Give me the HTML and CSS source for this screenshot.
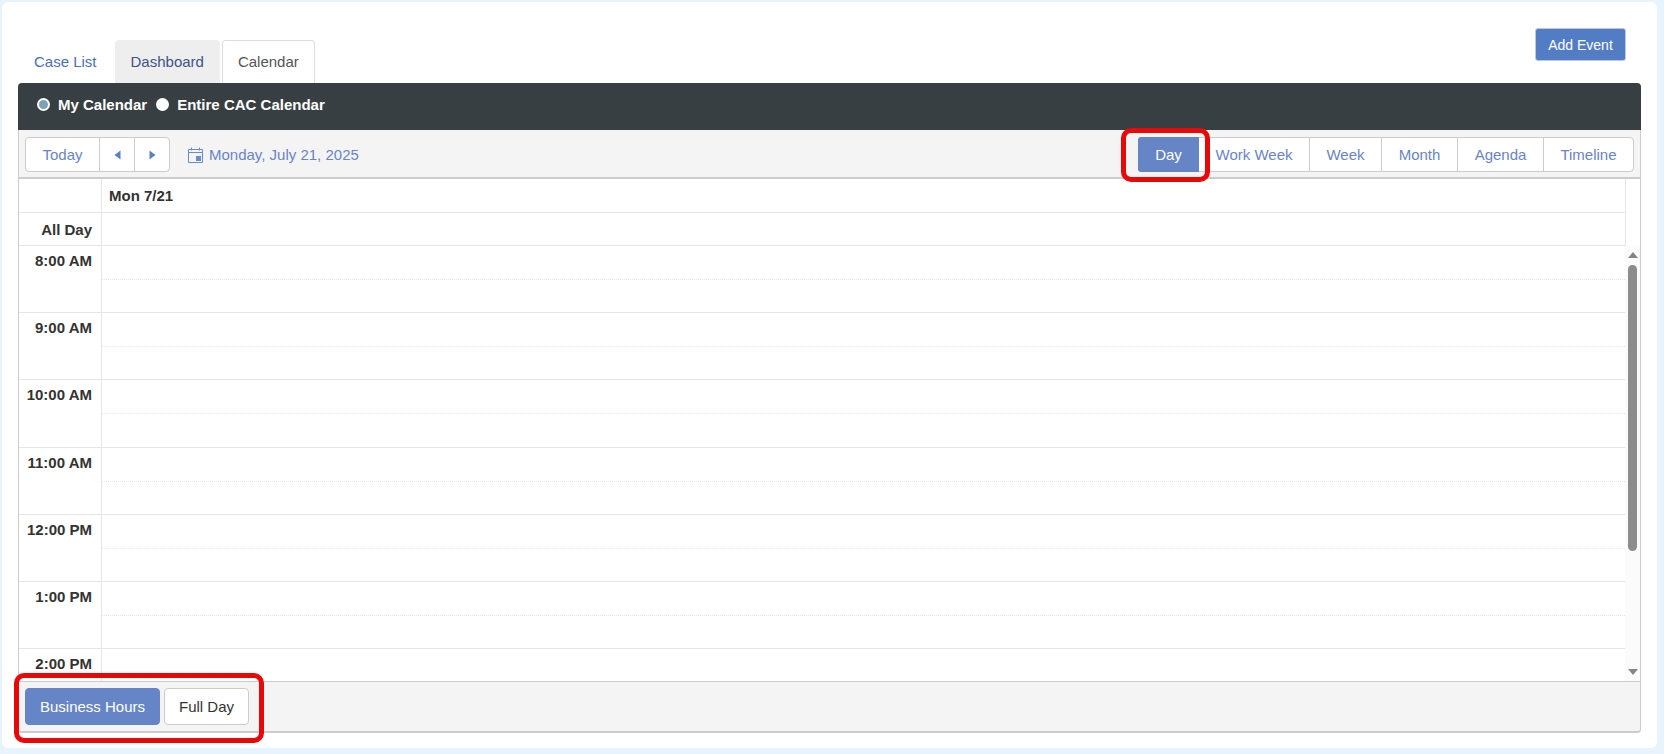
FILE: index.html
```html
<!DOCTYPE html>
<html lang="en">

<head>
    <meta charset="UTF-8">
    <meta name="viewport" content="width=device-width, initial-scale=1.0">
    <title>Calendar</title>
    <link rel="stylesheet" href="styles.css">
</head>

<body>

    <div class="card">

        <div class="top-row">
            <div class="tabs">
                <a class="tab">Case List</a>
                <a class="tab tab-grey">Dashboard</a>
                <a class="tab tab-active">Calendar</a>
            </div>
            <button class="add-btn">Add Event</button>
        </div>

        <div class="panel">

            <div class="dark-bar">
                <label class="radio-label"><span class="radio radio-on"></span>My Calendar</label>
                <label class="radio-label"><span class="radio"></span>Entire CAC Calendar</label>
            </div>

            <div class="toolbar">
                <div class="nav-group">
                    <span class="seg seg-today">Today</span>
                    <span class="seg seg-arrow">
                        <svg width="7" height="10" viewBox="0 0 7 10"><path d="M6.5 0.5V9.5L0.5 5Z" fill="#5b7fc4" /></svg>
                    </span>
                    <span class="seg seg-arrow">
                        <svg width="7" height="10" viewBox="0 0 7 10"><path d="M0.5 0.5V9.5L6.5 5Z" fill="#5b7fc4" /></svg>
                    </span>
                </div>

                <div class="date-label">
                    <svg class="date-icon" width="15" height="16" viewBox="0 0 15 16">
                        <path d="M0.5 2.5H14.5V15.5H0.5ZM0.5 5.5H14.5M3.5 0.5V3.5M11.5 0.5V3.5" fill="none" stroke="#6a8acb" />
                        <rect x="8" y="9" width="5" height="5" fill="#6a8acb" />
                    </svg>
                    Monday, July 21, 2025
                </div>

                <div class="view-group">
                    <span class="view view-day">Day</span>
                    <span class="view view-workweek">Work Week</span>
                    <span class="view view-week">Week</span>
                    <span class="view view-month">Month</span>
                    <span class="view view-agenda">Agenda</span>
                    <span class="view view-timeline">Timeline</span>
                </div>
            </div>

            <div class="head-rows">
                <div class="head-row head-row-day">
                    <div class="time-cell"></div>
                    <div class="day-cell">Mon 7/21</div>
                </div>
                <div class="head-row head-row-allday">
                    <div class="time-cell">All Day</div>
                    <div class="day-cell"></div>
                </div>
            </div>

            <div class="grid-wrap">
                <div class="slots">
                    <div class="hour"><div class="time-cell">8:00 AM</div><div class="hour-body"><div class="half"></div><div class="half"></div></div></div>
                    <div class="hour"><div class="time-cell">9:00 AM</div><div class="hour-body"><div class="half"></div><div class="half"></div></div></div>
                    <div class="hour"><div class="time-cell">10:00 AM</div><div class="hour-body"><div class="half"></div><div class="half"></div></div></div>
                    <div class="hour"><div class="time-cell">11:00 AM</div><div class="hour-body"><div class="half"></div><div class="half"></div></div></div>
                    <div class="hour"><div class="time-cell">12:00 PM</div><div class="hour-body"><div class="half"></div><div class="half"></div></div></div>
                    <div class="hour"><div class="time-cell">1:00 PM</div><div class="hour-body"><div class="half"></div><div class="half"></div></div></div>
                    <div class="hour"><div class="time-cell">2:00 PM</div><div class="hour-body"><div class="half"></div><div class="half"></div></div></div>
                </div>
                <div class="scrollbar">
                    <svg class="scroll-arrow" width="10" height="6" viewBox="0 0 10 6"><path d="M5 0L10 6H0Z" fill="#858585" /></svg>
                    <div class="scroll-track"><div class="scroll-thumb"></div></div>
                    <svg class="scroll-arrow" width="10" height="6" viewBox="0 0 10 6"><path d="M0 0H10L5 6Z" fill="#858585" /></svg>
                </div>
            </div>

            <div class="footer">
                <button class="foot-btn foot-btn-on">Business Hours</button>
                <button class="foot-btn">Full Day</button>
            </div>

            <div class="mark mark-day"></div>
            <div class="mark mark-hours"></div>

        </div>
    </div>

</body>

</html>
```

FILE: styles.css
```css
* {
    box-sizing: border-box;
}

html,
body {
    height: 100%;
}

body {
    margin: 0;
    padding: 2px 7px 6px 2px;
    background-color: #e8f4fd;
    font-family: "Liberation Sans", Arial, sans-serif;
    font-size: 15px;
    color: #333;
    overflow: hidden;
}

.card {
    height: 100%;
    padding: 26px 16px 0 16px;
    background: white;
    border-radius: 6px;
}

.top-row {
    display: flex;
    justify-content: space-between;
    height: 55px;
}

.tabs {
    display: flex;
    gap: 2px;
    margin-top: 12px;
}

.tab {
    display: block;
    height: 43px;
    padding: 12px 15px 0 15px;
    border: 1px solid transparent;
    border-bottom: none;
    border-radius: 4px 4px 0 0;
    color: #4a6fb5;
}

.tab-grey {
    background: #eeeeee;
    color: #3f5488;
}

.tab-active {
    background: white;
    border-color: #dddddd;
    color: #555;
}

.add-btn {
    width: 91px;
    height: 33px;
    margin-right: 15px;
    background: #527dc5;
    border: 1px solid #bcc8dd;
    border-radius: 3px;
    color: white;
    font: 14px "Liberation Sans", Arial, sans-serif;
}

.panel {
    position: relative;
    width: 1623px;
}

.dark-bar {
    display: flex;
    align-items: center;
    gap: 9px;
    height: 47px;
    padding: 0 0 4px 19px;
    background: #383f42;
    border-radius: 4px 4px 0 0;
}

.radio-label {
    display: flex;
    align-items: center;
    gap: 8px;
    color: white;
    font-weight: bold;
}

.radio {
    width: 13px;
    height: 13px;
    background: white;
    border-radius: 50%;
}

.radio-on {
    background: #7ba3b5;
    border: 2px solid white;
}

.toolbar {
    display: flex;
    align-items: center;
    height: 49px;
    padding: 2px 6px 0 6px;
    background: #f4f4f4;
    border: 1px solid #cccccc;
    border-top: none;
    border-bottom: 2px solid #cccccc;
}

.nav-group,
.view-group {
    display: flex;
    height: 35px;
    background: white;
    border: 1px solid #cccccc;
    border-radius: 4px;
    color: #6a84c6;
}

.seg {
    display: flex;
    align-items: center;
    justify-content: center;
    border-left: 1px solid #cccccc;
}

.seg-today {
    width: 73px;
    border-left: none;
}

.seg-arrow {
    width: 35px;
}

.date-label {
    display: flex;
    align-items: center;
    gap: 6px;
    margin-left: 18px;
    color: #6a84c6;
}

.view-group {
    margin-left: auto;
}

.view {
    display: flex;
    align-items: center;
    justify-content: center;
    border-left: 1px solid #cccccc;
}

.view-day {
    width: 61px;
    margin: -1px 0 -1px -1px;
    background: #6585c6;
    border: none;
    border-radius: 3px 0 0 3px;
    color: white;
}

.view-workweek {
    width: 110px;
    border-left: none;
}

.view-week {
    width: 72px;
}

.view-month {
    width: 76px;
}

.view-agenda {
    width: 86px;
}

.view-timeline {
    width: 90px;
}

.head-rows {
    border-left: 1px solid #cccccc;
    border-right: 1px solid #cccccc;
}

.head-row {
    display: flex;
    height: 33.5px;
    margin-right: 14px;
    border-right: 1px solid #e6e6e6;
    border-bottom: 1px solid #e6e6e6;
    font-weight: bold;
}

.time-cell {
    flex: none;
    width: 83px;
    padding: 8px 9px 0 0;
    border-right: 1px solid #e6e6e6;
    text-align: right;
    font-weight: bold;
}

.day-cell {
    flex: 1;
    padding: 8px 7px 0 7px;
}

.grid-wrap {
    display: flex;
    height: 435px;
    border-left: 1px solid #cccccc;
    border-right: 1px solid #cccccc;
    overflow: hidden;
}

.slots {
    flex: 1;
}

.hour {
    display: flex;
    height: 67.2px;
    border-bottom: 1px solid #e6e6e6;
}

.hour .time-cell {
    padding-top: 6px;
}

.hour-body {
    flex: 1;
}

.half {
    height: 32px;
}

.half:first-child {
    height: 34px;
    border-bottom: 1px dotted #e6e6e6;
}

.scrollbar {
    display: flex;
    flex-direction: column;
    align-items: center;
    flex: none;
    width: 15px;
    padding: 6px 0 6px 0;
    background: #fbfbfb;
}

.scroll-track {
    flex: 1;
    width: 9px;
    padding-top: 7px;
}

.scroll-thumb {
    height: 286px;
    background: #8c8c8c;
    border-radius: 5px;
}

.footer {
    display: flex;
    gap: 4px;
    height: 52px;
    padding: 6px 6px 0 6px;
    background: #f4f4f4;
    border: 1px solid #cccccc;
    border-bottom: 2px solid #cccccc;
    border-radius: 0 0 4px 4px;
}

.foot-btn {
    height: 37px;
    width: 85px;
    background: white;
    border: 1px solid #cccccc;
    border-radius: 4px;
    color: #333;
    font: 15px "Liberation Sans", Arial, sans-serif;
}

.foot-btn-on {
    width: 135px;
    background: #6585c6;
    border-color: #6585c6;
    color: white;
}

/* red highlights drawn over the screenshot */
.mark {
    position: absolute;
    border: 5px solid #e80808;
    border-radius: 10px;
}

.mark-day {
    left: 1103px;
    top: 45px;
    width: 89px;
    height: 54px;
}

.mark-hours {
    left: -4px;
    top: 590px;
    width: 250px;
    height: 70px;
}
```
